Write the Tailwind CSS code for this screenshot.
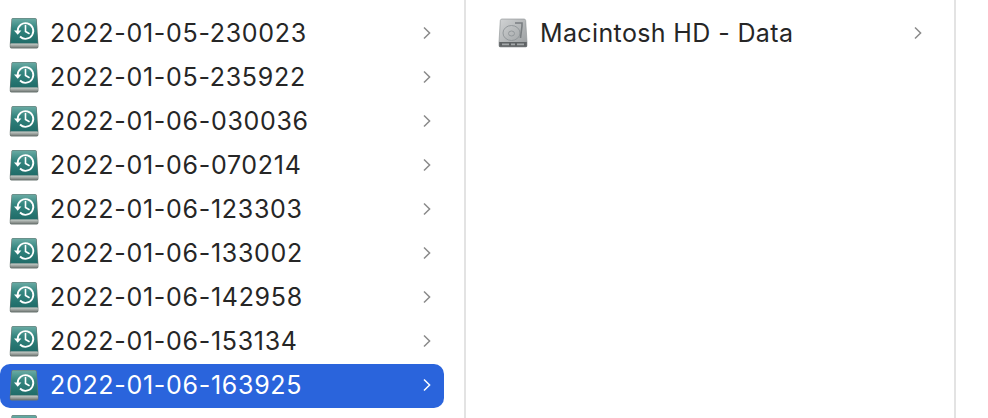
<!DOCTYPE html>
<html lang="en">
<head>
<meta charset="UTF-8">
<title>Backups</title>
<script src="https://cdn.jsdelivr.net/npm/@tailwindcss/browser@4"></script>
</head>
<body class="w-[988px] h-[418px] overflow-hidden bg-white font-['Inter','Liberation_Sans',sans-serif] text-[#262626]">
<svg width="0" height="0" class="absolute">
  <defs>
    <linearGradient id="cover" x1="0" y1="0" x2="0" y2="1">
      <stop offset="0" stop-color="#6aaba4"/>
      <stop offset="0.4" stop-color="#33857f"/>
      <stop offset="1" stop-color="#1f6b68"/>
    </linearGradient>
    <linearGradient id="pages" x1="0" y1="0" x2="0" y2="1">
      <stop offset="0" stop-color="#c6cfca"/>
      <stop offset="1" stop-color="#7c817e"/>
    </linearGradient>
    <linearGradient id="disk" x1="0" y1="0" x2="1" y2="1">
      <stop offset="0" stop-color="#d2d4d5"/>
      <stop offset="1" stop-color="#989c9e"/>
    </linearGradient>
    <symbol id="tm" viewBox="0 0 30 32">
      <path d="M3.8 1 H26 Q27.6 1 27.8 2.6 L29.4 27 V29.8 Q29.4 31.4 27.8 31.4 H2.4 Q0.8 31.4 0.8 29.8 V27 L2.4 2.6 Q2.6 1 3.8 1Z" fill="#6a7672"/>
      <path d="M4 1.5 H25.8 Q27 1.5 27.2 2.8 L28.8 26.6 H1.4 L3 2.8 Q3.2 1.5 4 1.5Z" fill="url(#cover)"/>
      <rect x="1.3" y="26.6" width="27.6" height="3.8" rx="0.8" fill="url(#pages)"/>
      <path d="M8.7 14 A7.8 7.8 0 1 1 11 19.5" fill="none" stroke="#fff" stroke-width="1.8"/>
      <path d="M5 13.4 H12.4 L8.7 17.8Z" fill="#fff"/>
      <path d="M16.5 8.5 V14.5 L20 16.5" fill="none" stroke="#fff" stroke-width="1.6" stroke-linecap="round"/>
    </symbol>
    <symbol id="hd" viewBox="0 0 30 30">
      <path d="M4 1 H26 Q27.5 1 27.7 2.5 L29 24 V27.5 Q29 29 27.5 29 H2.5 Q1 29 1 27.5 V24 L2.3 2.5 Q2.5 1 4 1Z" fill="url(#disk)" stroke="#8a8e90" stroke-width="0.6"/>
      <rect x="1.2" y="24" width="27.6" height="4.8" fill="#5f6365"/>
      <path d="M4 26.4 H11 M13 26.4 H17 M19 26.4 H26" stroke="#a3a7a9" stroke-width="1.6"/>
      <ellipse cx="13.5" cy="15" rx="8.5" ry="7.5" fill="none" stroke="#8f9497" stroke-width="0.9"/>
      <ellipse cx="13.5" cy="15.5" rx="3" ry="2.5" fill="none" stroke="#8f9497" stroke-width="0.9"/>
      <path d="M17 5 H24 V8 L22.5 20" fill="none" stroke="#797e81" stroke-width="1.6"/>
    </symbol>
    <symbol id="chev" viewBox="0 0 10 14">
      <path d="M2 1.5 L7.6 7 L2 12.5" fill="none" stroke="currentColor" stroke-width="1.5"/>
    </symbol>
  </defs>
</svg>
<div class="flex h-[418px] overflow-hidden">
  <div class="w-[464px] h-[418px] shrink-0 overflow-hidden">
    <ul class="flex flex-col pt-[11px] w-[444px]">
      <li class="h-[44px] flex items-center"><svg class="w-[30px] h-[32px] ml-[9px] shrink-0"><use href="#tm"/></svg><span class="ml-[11px] text-[25px] tracking-[0.7px] leading-none flex-1">2022-01-05-230023</span><svg class="w-[10px] h-[14px] mr-[12px] text-[#8a8a8a]"><use href="#chev"/></svg></li>
      <li class="h-[44px] flex items-center"><svg class="w-[30px] h-[32px] ml-[9px] shrink-0"><use href="#tm"/></svg><span class="ml-[11px] text-[25px] tracking-[0.7px] leading-none flex-1">2022-01-05-235922</span><svg class="w-[10px] h-[14px] mr-[12px] text-[#8a8a8a]"><use href="#chev"/></svg></li>
      <li class="h-[44px] flex items-center"><svg class="w-[30px] h-[32px] ml-[9px] shrink-0"><use href="#tm"/></svg><span class="ml-[11px] text-[25px] tracking-[0.7px] leading-none flex-1">2022-01-06-030036</span><svg class="w-[10px] h-[14px] mr-[12px] text-[#8a8a8a]"><use href="#chev"/></svg></li>
      <li class="h-[44px] flex items-center"><svg class="w-[30px] h-[32px] ml-[9px] shrink-0"><use href="#tm"/></svg><span class="ml-[11px] text-[25px] tracking-[0.7px] leading-none flex-1">2022-01-06-070214</span><svg class="w-[10px] h-[14px] mr-[12px] text-[#8a8a8a]"><use href="#chev"/></svg></li>
      <li class="h-[44px] flex items-center"><svg class="w-[30px] h-[32px] ml-[9px] shrink-0"><use href="#tm"/></svg><span class="ml-[11px] text-[25px] tracking-[0.7px] leading-none flex-1">2022-01-06-123303</span><svg class="w-[10px] h-[14px] mr-[12px] text-[#8a8a8a]"><use href="#chev"/></svg></li>
      <li class="h-[44px] flex items-center"><svg class="w-[30px] h-[32px] ml-[9px] shrink-0"><use href="#tm"/></svg><span class="ml-[11px] text-[25px] tracking-[0.7px] leading-none flex-1">2022-01-06-133002</span><svg class="w-[10px] h-[14px] mr-[12px] text-[#8a8a8a]"><use href="#chev"/></svg></li>
      <li class="h-[44px] flex items-center"><svg class="w-[30px] h-[32px] ml-[9px] shrink-0"><use href="#tm"/></svg><span class="ml-[11px] text-[25px] tracking-[0.7px] leading-none flex-1">2022-01-06-142958</span><svg class="w-[10px] h-[14px] mr-[12px] text-[#8a8a8a]"><use href="#chev"/></svg></li>
      <li class="h-[44px] flex items-center"><svg class="w-[30px] h-[32px] ml-[9px] shrink-0"><use href="#tm"/></svg><span class="ml-[11px] text-[25px] tracking-[0.7px] leading-none flex-1">2022-01-06-153134</span><svg class="w-[10px] h-[14px] mr-[12px] text-[#8a8a8a]"><use href="#chev"/></svg></li>
      <li class="h-[44px] mt-[1px] pb-[2px] flex items-center bg-[#2a64dc] rounded-[10px] text-white"><svg class="w-[30px] h-[32px] ml-[9px] shrink-0"><use href="#tm"/></svg><span class="ml-[11px] text-[25px] tracking-[0.7px] leading-none flex-1">2022-01-06-163925</span><svg class="w-[10px] h-[14px] mr-[12px] text-white"><use href="#chev"/></svg></li>
      <li class="h-[44px] flex items-center"><svg class="w-[30px] h-[32px] ml-[9px] shrink-0"><use href="#tm"/></svg></li>
    </ul>
  </div>
  <div class="w-[2px] shrink-0 bg-[#e3e3e3]"></div>
  <div class="w-[488px] shrink-0 pt-[11px] pl-[32px]">
    <div class="h-[44px] flex items-center"><svg class="w-[30px] h-[30px] shrink-0"><use href="#hd"/></svg><span class="ml-[12px] text-[25px] tracking-[0.37px] leading-none flex-1">Macintosh HD - Data</span><svg class="w-[10px] h-[14px] mr-[31px] text-[#8a8a8a]"><use href="#chev"/></svg></div>
  </div>
  <div class="w-[2px] shrink-0 bg-[#e3e3e3]"></div>
</div>
</body>
</html>
